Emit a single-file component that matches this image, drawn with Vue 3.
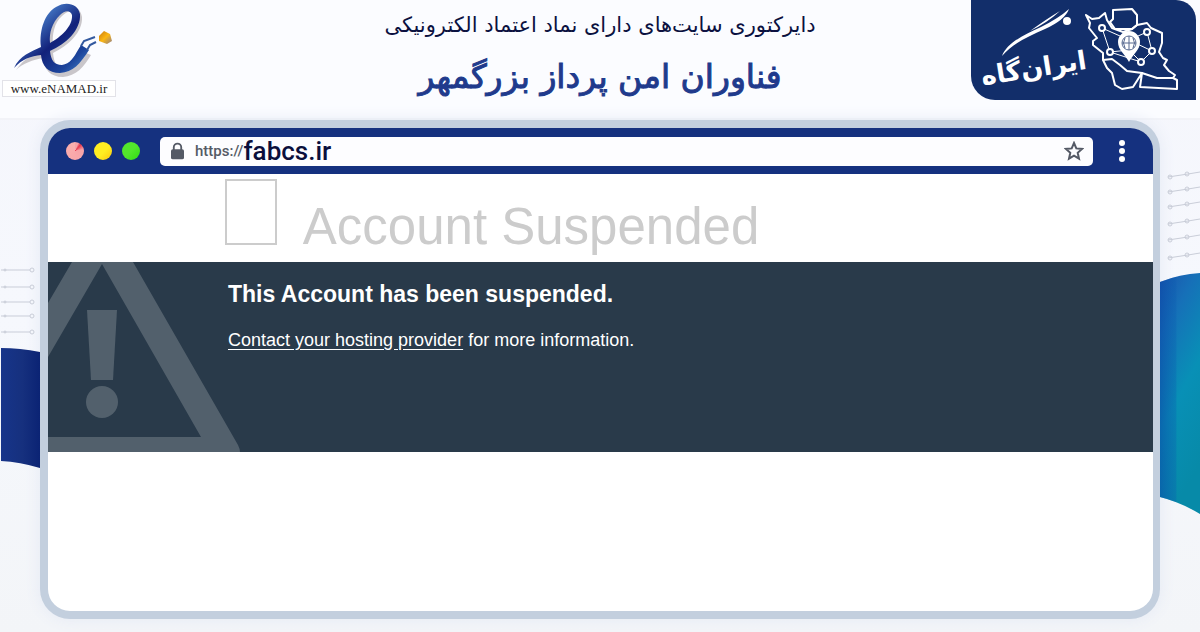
<template>
  <div class="page">
    <header class="topBar">
      <a class="enamad" href="#">
        <svg class="enamadMark" viewBox="0 0 116 80" aria-hidden="true">
          <defs>
            <linearGradient id="ribbon" x1="0" y1="0" x2="1" y2="1">
              <stop offset="0" stop-color="#16246e" />
              <stop offset="0.3" stop-color="#3d6cbb" />
              <stop offset="0.55" stop-color="#12217a" />
              <stop offset="0.8" stop-color="#1c459c" />
              <stop offset="1" stop-color="#4a8ad0" />
            </linearGradient>
            <linearGradient id="chip" x1="0" y1="0" x2="1" y2="1">
              <stop offset="0" stop-color="#c87a12" />
              <stop offset="0.5" stop-color="#fbb612" />
              <stop offset="1" stop-color="#8f7f8c" />
            </linearGradient>
          </defs>
          <path class="shade" fill-rule="evenodd" d="M16 70C24 58 33 55 43 50C43 33 48 17 59 9C68 3 80 5 82 17C83 32 68 46 53 53C54 63 57 69 66 69C75 68 79 60 84 52L91 55C84 67 76 76 63 77C50 77 44 69 43 58C33 60 23 63 16 70ZM53 45C66 38 76 27 75 16C73 9 67 11 62 16C54 23 52 35 53 45Z" />
          <path class="ribbon" fill-rule="evenodd" d="M14 68C20 55 31 52 41 47C39 30 45 13 56 7C65 1 78 3 80 14C81 30 66 44 50 51C51 60 54 65 62 65C70 64 74 57 78 50L81 45L89 50C80 64 73 72 60 73C48 73 42 66 41 55C31 56 22 59 14 68ZM50 43C61 37 73 26 72 15C70 9 64 11 60 15C52 23 49 33 50 43Z" />
          <path class="prongs" d="M81 46L84 41L95 37M87 50L90 45L96 42" />
          <path fill="url(#chip)" d="M99 36L104 31L110 34L112 41L107 44L99 41Z" />
        </svg>
        <span class="enamadText">www.eNAMAD.ir</span>
      </a>

      <div class="titles" dir="rtl" lang="fa">
        <p>دایرکتوری سایت‌های دارای نماد اعتماد الکترونیکی</p>
        <h1>فناوران امن پرداز بزرگمهر</h1>
      </div>

      <a class="irangah" href="#">
        <svg viewBox="0 0 225 100" aria-hidden="true">
          <path class="swoosh" d="M31 56C36 43 51 36 70 27Q88 18 98 9Q94 20 74 29C54 38 41 44 31 56ZM59 31Q76 23 89 11Q77 18 59 31Z" />
          <circle class="swoosh" cx="96" cy="21" r="4" />
          <text class="irangahText" x="64" y="77" transform="rotate(-9 64 77)">ایران‌گاه</text>
          <g class="map">
            <path d="M115 15L121 19L128 18L134 13L136 20L141 28L152 32L161 29L166 25L176 23L180 28L191 33L191 43L188 52L192 58L196 60L193 65L198 71L204 75L202 78L186 78L171 73L156 71L149 65L141 59L132 60L132 53L122 45L122 41L126 38L118 28L119 23Z" />
            <path d="M142 10L161 9L166 15V25L161 29H144L139 22L142 19ZM132 60L136 68L141 73L144 85L151 89L162 87L171 73L169 87L206 89V80L202 78" />
            <path class="thin" d="M131 28L158 40L176 32L181 51L170 62L158 50L139 52L131 28M139 52L170 62M158 40L181 51" />
          </g>
          <path class="pin" d="M158 62C154 54 147 50 147 42A11 11 0 0 1 169 42C169 50 162 54 158 62Z" />
          <g class="globe">
            <circle cx="158" cy="43" r="7" />
            <path d="M151 43H165M158 36V50M154 38Q151 43 154 48M162 38Q165 43 162 48" />
          </g>
          <g class="nodes">
            <circle v-for="n in mapNodes" :key="n.x" :cx="n.x" :cy="n.y" r="3" />
          </g>
        </svg>
      </a>
    </header>

    <main class="stage">
      <svg class="side" viewBox="0 0 40 512" preserveAspectRatio="none" aria-hidden="true">
        <defs>
          <linearGradient id="navy">
            <stop offset="0" stop-color="#17358a" />
            <stop offset="0.55" stop-color="#16307e" />
            <stop offset="1" stop-color="#0b2374" />
          </linearGradient>
        </defs>
        <g class="circuit">
          <g v-for="y in leftLines" :key="y">
            <path :d="`M1 ${y}H30`" />
            <circle cx="5" :cy="y" r="1" />
            <circle cx="32" :cy="y" r="2" />
          </g>
        </g>
        <path fill="url(#navy)" d="M1 228Q20 228 40 232V348Q20 342 1 341Z" />
      </svg>

      <section class="browser">
        <div class="toolbar">
          <button class="dot red" aria-label="Close"></button>
          <button class="dot yellow" aria-label="Minimize"></button>
          <button class="dot green" aria-label="Maximize"></button>
          <div class="address">
            <svg class="lock" viewBox="0 0 14 18" aria-hidden="true">
              <path d="M3 8V5A4 4 0 0 1 11 5V8" fill="none" stroke="#555a66" stroke-width="2" />
              <rect x="0" y="7" width="14" height="11" rx="2" fill="#555a66" />
            </svg>
            <label for="url">https://</label>
            <input id="url" v-model="url" type="text" spellcheck="false" />
            <button class="star" aria-label="Bookmark">
              <svg viewBox="0 0 20 20" aria-hidden="true">
                <path d="M10 2L12.3 7.4L18 7.9L13.7 11.8L15 17.6L10 14.6L5 17.6L6.3 11.8L2 7.9L7.7 7.4Z" />
              </svg>
            </button>
          </div>
          <button class="menu" aria-label="Menu">
            <svg viewBox="0 0 6 22" aria-hidden="true">
              <circle cx="3" cy="3" r="3" />
              <circle cx="3" cy="11" r="3" />
              <circle cx="3" cy="19" r="3" />
            </svg>
          </button>
        </div>

        <div class="siteHead">
          <div class="emptyIcon"></div>
          <h2>Account Suspended</h2>
        </div>

        <div class="notice">
          <svg class="warning" viewBox="0 0 192 190" aria-hidden="true">
            <path fill-rule="evenodd" d="M24 0H85L190 183Q192 187 192 190H0V175H153L54 2L0 95V41Z" />
            <path d="M39 48H69L65 118H43Z" />
            <circle cx="54" cy="140" r="16" />
          </svg>
          <div class="noticeText">
            <h3>This Account has been suspended.</h3>
            <p><a href="#">Contact your hosting provider</a> for more information.</p>
          </div>
        </div>
      </section>

      <svg class="side" viewBox="0 0 40 512" preserveAspectRatio="none" aria-hidden="true">
        <defs>
          <linearGradient id="teal" x1="0" y1="0" x2="0.3" y2="1">
            <stop offset="0" stop-color="#1b54ae" />
            <stop offset="0.25" stop-color="#1670b8" />
            <stop offset="0.6" stop-color="#0890b6" />
            <stop offset="1" stop-color="#078aa8" />
          </linearGradient>
          <linearGradient id="fold">
            <stop offset="0" stop-color="#0a4ca8" stop-opacity="0.6" />
            <stop offset="0.4" stop-color="#0a5cb0" stop-opacity="0.3" />
            <stop offset="0.42" stop-color="#0a5cb0" stop-opacity="0" />
          </linearGradient>
        </defs>
        <g class="circuit">
          <g v-for="y in rightLines" :key="y">
            <path :d="`M8 ${y + 3}L28 ${y}L40 ${y - 2}`" />
            <circle cx="10" :cy="y + 3" r="2" />
            <circle cx="27" :cy="y" r="2" />
          </g>
        </g>
        <path fill="url(#teal)" d="M0 162Q20 154 40 153V394Q20 382 0 377Z" />
        <path fill="url(#fold)" d="M0 162Q20 154 40 153V394Q20 382 0 377Z" />
      </svg>
    </main>
  </div>
</template>

<script setup>
import { ref } from "vue";

const url = ref("fabcs.ir");

const mapNodes = [
  { x: 131, y: 28 },
  { x: 176, y: 32 },
  { x: 181, y: 51 },
  { x: 170, y: 62 },
  { x: 139, y: 52 },
];

const leftLines = [150, 167, 182, 196, 212];
const rightLines = [54, 69, 84, 101, 117, 135];
</script>

<style>
body {
  margin: 0;
  background-color: #f4f6fa;
}
</style>

<style scoped>
.page {
  min-height: 100vh;
  display: flex;
  flex-direction: column;
  background: linear-gradient(#f5f6fc, #f6f8fd 50%, #f3f5f8);
}

h1,
h2,
h3,
p {
  margin: 0;
}

button {
  padding: 0;
  border: none;
  background: none;
}

.topBar {
  display: grid;
  grid-template-columns: 229px 1fr 229px;
  align-items: start;
  height: 118px;
  background-color: #fbfcff;
  border-bottom: 2px solid #f2f3f8;
}

.enamad {
  width: 116px;
  display: flex;
  flex-direction: column;
  color: #222;
  text-decoration: none;
}

.enamadMark {
  width: 116px;
  height: 80px;
}

.ribbon {
  fill: url(#ribbon);
}

.shade {
  fill: #c9c6ca;
}

.prongs {
  fill: none;
  stroke: #33599f;
  stroke-width: 2;
}

.enamadText {
  margin-left: 2px;
  border: 1px solid #e2e2e8;
  background-color: #fff;
  font-family: "Liberation Serif", serif;
  font-size: 13px;
  line-height: 15px;
  text-align: center;
}

.titles {
  display: flex;
  flex-direction: column;
  align-items: center;
  font-family: "DejaVu Sans", sans-serif;
  white-space: nowrap;
}

.titles p {
  color: #0b1140;
  font-size: 21px;
  line-height: 50px;
}

.titles h1 {
  color: #203a8c;
  font-size: 33px;
  font-weight: normal;
  line-height: 54px;
  -webkit-text-stroke: 1px #203a8c;
}

.irangah {
  justify-self: end;
  width: 225px;
  height: 100px;
  margin-right: 4px;
  border-radius: 0 20px 0 24px;
  background-color: #122e6a;
}

.swoosh,
.pin {
  fill: #fff;
}

.irangahText {
  fill: #fff;
  font-family: "DejaVu Sans", sans-serif;
  font-size: 26px;
  font-weight: bold;
  text-anchor: middle;
}

.map {
  fill: none;
  stroke: #fff;
  stroke-width: 2;
  stroke-linejoin: round;
}

.thin {
  stroke-width: 1;
}

.globe {
  fill: none;
  stroke: #56688f;
  stroke-width: 1;
}

.nodes {
  fill: #122e6a;
  stroke: #fff;
  stroke-width: 2;
}

.stage {
  flex: 1;
  display: grid;
  grid-template-columns: 40px 1fr 40px;
}

.side {
  position: relative;
  width: 40px;
  height: 512px;
}

.circuit {
  fill: none;
  stroke: #c9cdd8;
  stroke-width: 1;
}

.browser {
  margin-bottom: 13px;
  border: 8px solid #c3cfde;
  border-right-width: 7px;
  border-radius: 30px;
  background-color: #fff;
  box-shadow: 0 0 16px #e4e9f4;
  overflow: hidden;
}

.toolbar {
  display: flex;
  align-items: center;
  gap: 10px;
  height: 46px;
  padding: 0 28px 0 18px;
  background-color: #15317f;
}

.dot {
  width: 18px;
  height: 18px;
  border-radius: 50%;
}

.red {
  background: conic-gradient(#f7a3a8 20deg, #e8354b 40deg, #f7a3a8 80deg, #fbb0ae);
}

.yellow {
  background: linear-gradient(135deg, #ffee22 55%, #fbc70d);
}

.green {
  background: linear-gradient(135deg, #52e72c 50%, #30da12);
}

.address {
  flex: 1;
  display: flex;
  align-items: center;
  height: 29px;
  margin: 0 16px 0 10px;
  padding: 0 9px 0 11px;
  border-radius: 5px;
  background-color: #fdfdff;
}

.lock {
  width: 13px;
  height: 18px;
}

.address label {
  margin-left: 11px;
  color: #555a66;
  font-family: Roboto, sans-serif;
  font-size: 15px;
  font-weight: 500;
}

.address input {
  flex: 1;
  min-width: 0;
  padding: 0;
  border: none;
  outline: none;
  background: none;
  color: #0b0f3c;
  font-family: Roboto, sans-serif;
  font-size: 26px;
  font-weight: 500;
  line-height: 28px;
}

.star,
.star svg {
  width: 20px;
  height: 20px;
  display: block;
}

.star path {
  fill: none;
  stroke: #555a66;
  stroke-width: 2;
}

.menu svg {
  display: block;
  width: 6px;
  height: 22px;
  fill: #fff;
}

.siteHead {
  display: flex;
  align-items: flex-start;
  gap: 26px;
  height: 83px;
  padding: 5px 0 0 16%;
}

.emptyIcon {
  width: 48px;
  height: 62px;
  border: 2px solid #ccc;
}

.siteHead h2 {
  padding-top: 19px;
  color: #ccc;
  font-family: "Liberation Sans", Arial, sans-serif;
  font-size: 51px;
  font-weight: normal;
  line-height: 58px;
}

.notice {
  display: grid;
  grid-template-columns: 180px 1fr;
  height: 190px;
  background-color: #293a4a;
  color: #fff;
  font-family: "Liberation Sans", Arial, sans-serif;
}

.warning {
  width: 192px;
  height: 190px;
  fill: #52606c;
}

.noticeText h3 {
  padding-top: 18px;
  font-size: 23px;
  line-height: 28px;
}

.noticeText p {
  padding-top: 20px;
  font-size: 18px;
  line-height: 24px;
}

.noticeText a {
  color: #fff;
  text-underline-offset: 3px;
}
</style>
